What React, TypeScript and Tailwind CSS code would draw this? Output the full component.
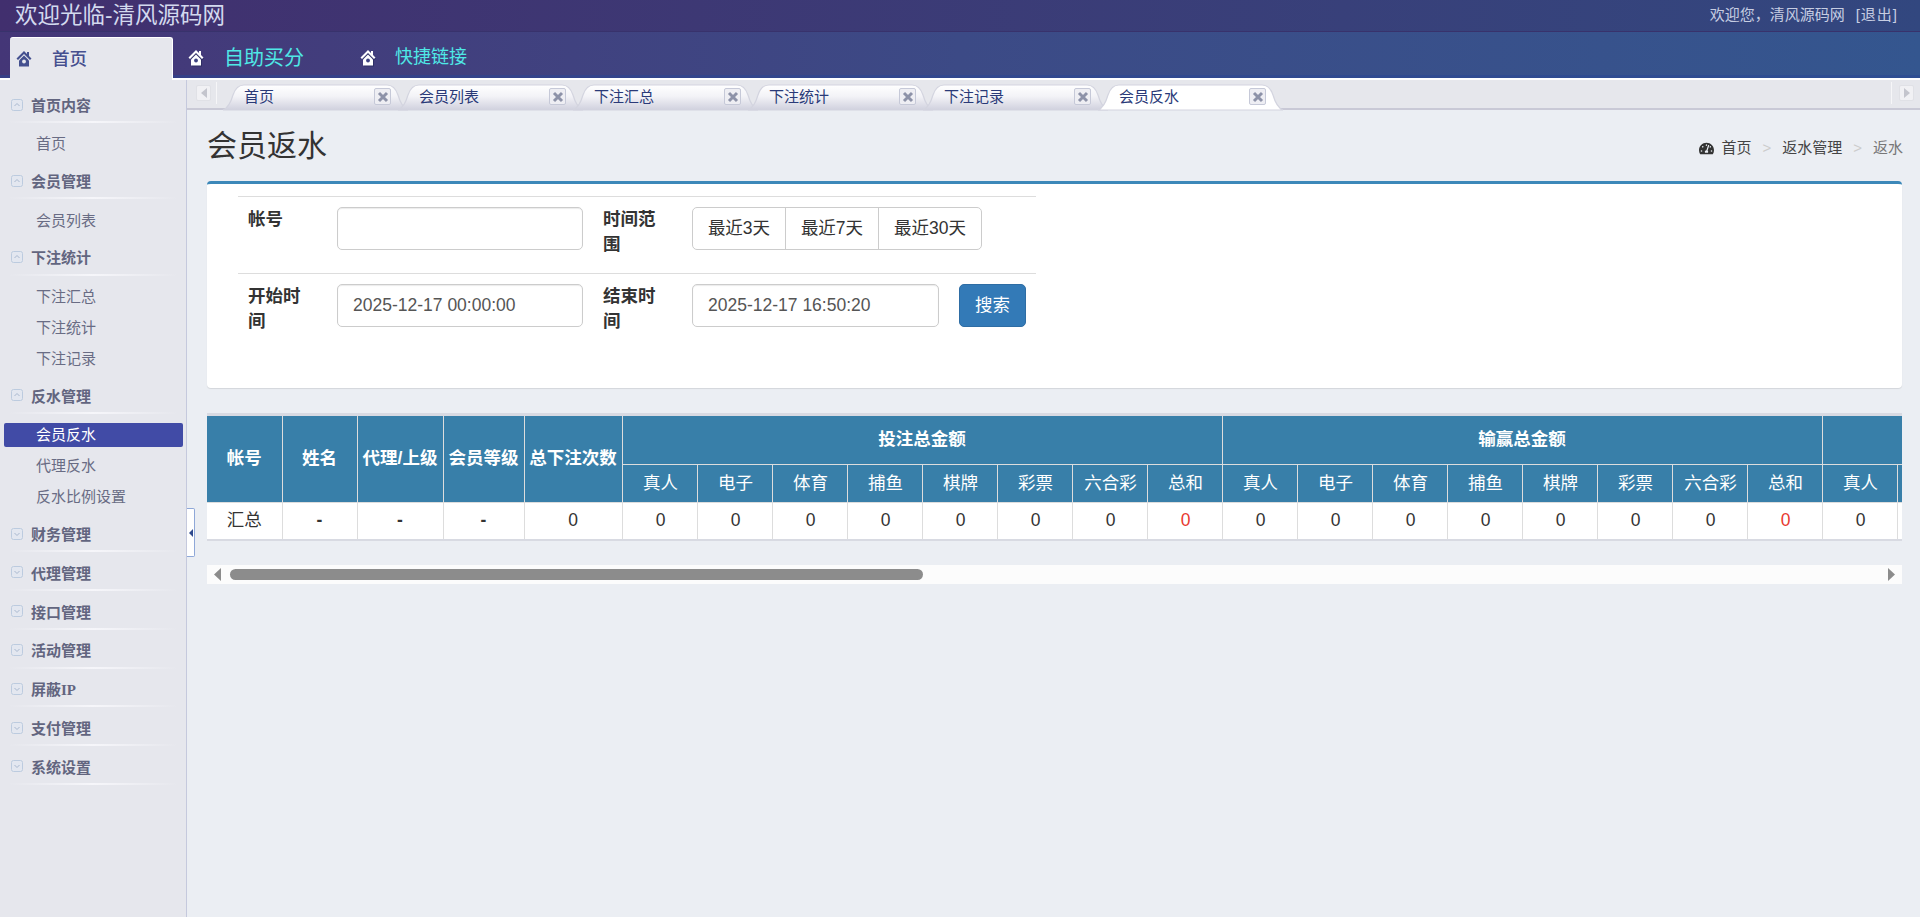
import { FaTachometerAlt } from 'react-icons/fa'

const sidebar = [
  { title: '首页内容', open: true, items: ['首页'] },
  { title: '会员管理', open: true, items: ['会员列表'] },
  { title: '下注统计', open: true, items: ['下注汇总', '下注统计', '下注记录'] },
  { title: '反水管理', open: true, items: ['会员反水', '代理反水', '反水比例设置'] },
  { title: '财务管理', open: false, items: [] },
  { title: '代理管理', open: false, items: [] },
  { title: '接口管理', open: false, items: [] },
  { title: '活动管理', open: false, items: [] },
  { title: '屏蔽IP', open: false, items: [] },
  { title: '支付管理', open: false, items: [] },
  { title: '系统设置', open: false, items: [] },
]

const tabs = ['首页', '会员列表', '下注汇总', '下注统计', '下注记录', '会员反水']
const subCols = ['真人', '电子', '体育', '捕鱼', '棋牌', '彩票', '六合彩', '总和']

function HomeIcon({ active }: { active?: boolean }) {
  const body = active ? '#44508f' : '#ffffff'
  const door = active ? '#e6e7ed' : '#3d4282'
  return (
    <svg width="16" height="18" viewBox="0 0 16 18" className="shrink-0">
      {!active && <path d="M9 2.5 2 9.5 3.5 11 4 10.5V17.5H14V10.5L14.5 11 16 9.5Z" fill="#27295c" opacity="0.7" />}
      <path d="M8 1 .5 8.5 2 10 8 4l6 6 1.5-1.5-2.5-2.5V2h-2v2z" fill={body} />
      <path d="M8 5.5 3 10.5V16.5H13V10.5Z" fill={body} />
      <circle cx="8" cy="11.5" r="1.9" fill={door} />
    </svg>
  )
}

function CollapseIcon({ open }: { open: boolean }) {
  return (
    <svg width="12" height="12" viewBox="0 0 12 12" className="shrink-0 mb-[3px]">
      <rect x="0.5" y="0.5" width="11" height="11" rx="2" fill="#e3e7f0" stroke="#bccbdf" />
      <path d={open ? 'M3.5 7 6 4.5 8.5 7' : 'M3.5 5 6 7.5 8.5 5'} fill="none" stroke="#a9b8cf" strokeWidth="1" />
    </svg>
  )
}

function TabShape({ active, id }: { active: boolean; id: string }) {
  return (
    <svg width="180" height="26" viewBox="0 0 180 26" className="absolute inset-0 overflow-visible">
      <defs>
        <linearGradient id={id} x1="0" y1="0" x2="0" y2="1">
          <stop offset="0" stopColor="#ffffff" />
          <stop offset="0.45" stopColor={active ? '#ffffff' : '#f3f3f7'} />
          <stop offset="1" stopColor={active ? '#ffffff' : '#d0d1de'} />
        </linearGradient>
      </defs>
      <path
        d="M-3 26C2 24 5 18 7 11 9 5 12 1 18 1H161C167 1 170 5 172 11 174 18 177 24 182 26Z"
        fill={`url(#${id})`}
        stroke="#d3d4df"
        strokeWidth="1.2"
      />
    </svg>
  )
}

function CloseBox() {
  return (
    <span className="absolute left-[148px] top-[4px] flex h-[17px] w-[17px] items-center justify-center rounded-[2px] border border-[#c6c9d8] bg-[#eeeef3]">
      <svg width="12" height="12" viewBox="0 0 12 12">
        <path d="M2 2 10 10M10 2 2 10" stroke="#8d92a8" strokeWidth="3" />
      </svg>
    </span>
  )
}

function ArrowBox({ right }: { right?: boolean }) {
  return (
    <span className="flex h-4 w-[15px] items-center justify-center rounded-[2px] border border-[#e0e1e6] bg-[#f1f1f4]">
      <svg width="6" height="10" viewBox="0 0 6 10">
        <path d={right ? 'M0 0 6 5 0 10Z' : 'M6 0 0 5 6 10Z'} fill="#c4c5cd" />
      </svg>
    </span>
  )
}

function Sidebar() {
  return (
    <div className="w-[187px] shrink-0 border-r border-[#c5c9dd] bg-[#e6e7ed] pt-[11px] [font-family:'Liberation_Serif','Noto_Sans_CJK_SC',serif]">
      {sidebar.map((section) => (
        <div key={section.title} className={section.open ? 'mb-[7.5px]' : ''}>
          <div className="h-[38.8px]">
            <div className="flex h-[30px] items-center gap-2 pl-[11px]">
              <CollapseIcon open={section.open} />
              <span className="text-[15px] font-bold text-[#62657f]">{section.title}</span>
            </div>
            <div className="mx-2 h-[2px] bg-gradient-to-r from-transparent via-[#f6f6fa] to-transparent" />
          </div>
          <div className={section.open ? '-mt-[1px]' : ''}>
            {section.items.map((item) => {
              const active = item === '会员反水'
              return (
                <div key={item} className="flex h-[31px] items-center pl-1 pr-[3px]">
                  <div
                    className={
                      'h-6 w-full rounded-[2px] pl-8 text-[15px] leading-6 ' +
                      (active ? 'bg-[#414ba6] text-white' : 'text-[#696c84]')
                    }
                  >
                    {item}
                  </div>
                </div>
              )
            })}
          </div>
        </div>
      ))}
    </div>
  )
}

function TabBar() {
  return (
    <div className="flex h-[30px] shrink-0 items-end border-b-2 border-[#c9c9d6] bg-[#e6e7ec] [font-family:'Liberation_Sans','Noto_Sans_CJK_SC',sans-serif]">
      <div className="ml-[9px] mb-[4px] flex h-[22px] items-center border-r border-[#f6f6f8] pr-[5px]">
        <ArrowBox />
      </div>
      <div className="ml-[9px] flex -mb-[2px]">
        {tabs.map((tab, i) => (
          <div key={tab} className={'relative -mr-[5px] h-[26px] w-[180px] ' + (i === 5 ? 'z-10' : '')}>
            <TabShape active={i === 5} id={`tab-grad-${i}`} />
            <span className="absolute left-[18px] top-[3px] text-[15px] leading-5 text-[#2a3a78]">{tab}</span>
            <CloseBox />
          </div>
        ))}
      </div>
      <div className="ml-auto mb-[4px] flex h-[22px] items-center gap-[7px] border-l border-[#f6f6f8] pl-[7px] pr-[6px]">
        <ArrowBox right />
      </div>
    </div>
  )
}

function SearchCard() {
  const input =
    'h-[42.5px] rounded-[5px] border border-[#ccc] bg-white px-[15px] text-[17.5px] text-[#555] shadow-[inset_0_1px_1px_rgba(0,0,0,0.08)]'
  return (
    <div className="h-[207px] rounded-[4px] border-t-[3px] border-[#3c88b9] bg-white pl-[31px] pt-3 shadow-[0_1px_1px_rgba(0,0,0,0.1)]">
      <table className="w-[798px] table-fixed border-collapse text-[17.5px] leading-[25px] text-[#333]">
        <colgroup>
          <col className="w-[89px]" />
          <col className="w-[266px]" />
          <col className="w-[89px]" />
          <col className="w-[267px]" />
          <col />
        </colgroup>
        <tbody>
          <tr className="h-[77px] border-t border-[#ddd] align-top">
            <th className="p-[10px] text-left font-bold">帐号</th>
            <td className="p-[10px]">
              <input className={input + ' w-full'} />
            </td>
            <th className="p-[10px] text-left font-bold">时间范围</th>
            <td className="p-[10px]" colSpan={2}>
              <div className="inline-flex h-[42.5px] items-stretch rounded-[5px] border border-[#ccc]">
                <span className="flex w-[92px] items-center justify-center">最近3天</span>
                <span className="flex w-[93px] items-center justify-center border-l border-[#ccc]">最近7天</span>
                <span className="flex w-[103px] items-center justify-center border-l border-[#ccc]">最近30天</span>
              </div>
            </td>
          </tr>
          <tr className="h-[77px] border-t border-[#ddd] align-top">
            <th className="p-[10px] text-left font-bold">开始时间</th>
            <td className="p-[10px]">
              <input className={input + ' w-full'} defaultValue="2025-12-17 00:00:00" />
            </td>
            <th className="p-[10px] text-left font-bold">结束时间</th>
            <td className="p-[10px]">
              <input className={input + ' w-full'} defaultValue="2025-12-17 16:50:20" />
            </td>
            <td className="p-[10px]">
              <button className="h-[42.5px] w-[67px] rounded-[5px] border border-[#2e6da4] bg-[#337ab7] text-white">搜索</button>
            </td>
          </tr>
        </tbody>
      </table>
    </div>
  )
}

function SubHeaders() {
  return (
    <>
      {subCols.map((c, i) => (
        <th key={i} className="border border-[#ddd] pl-[2px] font-normal">
          {c}
        </th>
      ))}
    </>
  )
}

function ZeroCells() {
  return (
    <>
      {subCols.map((c) => (
        <td key={c} className={'border border-b-0 border-[#ddd] pl-[2px] ' + (c === '总和' ? 'text-[#e8392f]' : '')}>
          0
        </td>
      ))}
    </>
  )
}

function ReportTable() {
  const leadCols = ['w-[75px]', 'w-[75px]', 'w-[86px]', 'w-[81px]', 'w-[98px]']
  return (
    <div className="mt-[25px] overflow-hidden border-y-[3px] border-[#d8dae2] border-b-2">
      <table className="w-[1765px] table-fixed border-collapse text-center text-[17.5px] leading-[25px] text-[#333]">
        <colgroup>
          {leadCols.map((w, i) => (
            <col key={i} className={w} />
          ))}
          {[...Array(18)].map((_, i) => (
            <col key={i} className="w-[75px]" />
          ))}
        </colgroup>
        <thead className="bg-[#387fa9] text-white">
          <tr className="h-[48px]">
            <th rowSpan={2} className="border border-l-0 border-t-0 border-[#ddd] px-0 font-bold">帐号</th>
            <th rowSpan={2} className="border border-t-0 border-[#ddd] px-0 font-bold">姓名</th>
            <th rowSpan={2} className="border border-t-0 border-[#ddd] px-0 font-bold">代理/上级</th>
            <th rowSpan={2} className="border border-t-0 border-[#ddd] px-0 font-bold">会员等级</th>
            <th rowSpan={2} className="border border-t-0 border-[#ddd] px-0 font-bold whitespace-nowrap">总下注次数</th>
            <th colSpan={8} className="border border-t-0 border-[#ddd] font-bold">投注总金额</th>
            <th colSpan={8} className="border border-t-0 border-[#ddd] font-bold">输赢总金额</th>
            <th colSpan={2} className="border border-t-0 border-[#ddd]" />
          </tr>
          <tr className="h-[38px]">
            <SubHeaders />
            <SubHeaders />
            <th className="border border-[#ddd] pl-[2px] font-normal">真人</th>
            <th className="border border-[#ddd]" />
          </tr>
        </thead>
        <tbody className="bg-white">
          <tr className="h-[37px]">
            <td className="border border-b-0 border-l-0 border-[#ddd]">汇总</td>
            <td className="border border-b-0 border-[#ddd] font-bold">-</td>
            <td className="border border-b-0 border-[#ddd] font-bold">-</td>
            <td className="border border-b-0 border-[#ddd] font-bold">-</td>
            <td className="border border-b-0 border-[#ddd]">0</td>
            <ZeroCells />
            <ZeroCells />
            <td className="border border-b-0 border-[#ddd] pl-[2px]">0</td>
            <td className="border border-b-0 border-[#ddd]" />
          </tr>
        </tbody>
      </table>
    </div>
  )
}

function FakeScrollbar() {
  return (
    <div className="mt-[24px] flex h-[19px] items-center bg-[#fcfcfc] pl-[7px] pr-[7px]">
      <svg width="7" height="13" viewBox="0 0 7 13" className="shrink-0">
        <path d="M7 0 0 6.5 7 13Z" fill="#8c8c8c" />
      </svg>
      <div className="ml-[9px] h-[11px] w-[693px] rounded-full bg-[#8c8c8c]" />
      <svg width="7" height="13" viewBox="0 0 7 13" className="ml-auto shrink-0">
        <path d="M0 0 7 6.5 0 13Z" fill="#8c8c8c" />
      </svg>
    </div>
  )
}

export default function App() {
  return (
    <div className="flex h-screen flex-col overflow-hidden bg-[#ebeef3] [font-family:'Liberation_Sans','Noto_Sans_CJK_SC',sans-serif]">
      {/* top bar */}
      <div className="flex h-[31px] shrink-0 items-center justify-between bg-gradient-to-r from-[#412f6e] to-[#32477f] pl-[15px] pr-[22px]">
        <span className="text-[22.5px] leading-[31px] text-[#d3d9ee]">欢迎光临-清风源码网</span>
        <span className="text-[15px] text-[#c6cde2]">
          欢迎您，清风源码网<span className="ml-[11px] tracking-[1px]">[退出]</span>
        </span>
      </div>

      {/* main nav */}
      <div className="flex h-[49px] shrink-0 items-end border-b-2 border-white bg-gradient-to-r from-[#443677] via-[#3c4a86] to-[#34568f] shadow-[inset_0_1px_0_#38326c,inset_0_-3px_0_rgba(40,70,150,0.5)]">
        <div className="z-10 ml-[10px] -mb-[2px] flex h-[43px] w-[163px] items-center gap-[20px] rounded-t-[3px] border-r border-t border-white bg-[#e6e7ed] pl-[6px]">
          <HomeIcon active />
          <span className="text-[17.5px] font-medium text-[#46508f]">首页</span>
        </div>
        <div className="ml-[15px] flex h-[41px] items-center gap-[20px]">
          <HomeIcon />
          <span className="text-[20px] text-[#4fe8e6]">自助买分</span>
        </div>
        <div className="ml-[56px] flex h-[41px] items-center gap-[19px]">
          <HomeIcon />
          <span className="text-[18px] text-[#4fe8e6]">快捷链接</span>
        </div>
      </div>

      <div className="flex min-h-0 flex-1">
        <Sidebar />
        <div className="relative flex min-w-0 flex-1 flex-col">
          {/* collapse handle */}
          <div className="absolute left-0 top-[428px] flex h-[49px] w-[8px] items-center justify-center rounded-r-[2px] border border-l-0 border-[#8fa8d8] bg-white">
            <svg width="4" height="8" viewBox="0 0 4 8">
              <path d="M4 0 0 4 4 8Z" fill="#2f4a8e" />
            </svg>
          </div>
          <TabBar />
          <div className="pl-5 pr-[18px]">
            <div className="flex h-[71px] items-center justify-between">
              <h1 className="text-[30px] font-normal text-[#333]">会员返水</h1>
              <div className="-mr-[1px] mt-[5px] flex items-center text-[15px] text-[#444]">
                <FaTachometerAlt className="mr-[7px] h-[15px] w-[15px] text-[#333]" />
                <span>首页</span>
                <span className="mx-[11px] text-[#ccc]">&gt;</span>
                <span>返水管理</span>
                <span className="mx-[11px] text-[#ccc]">&gt;</span>
                <span className="text-[#777]">返水</span>
              </div>
            </div>
            <SearchCard />
            <ReportTable />
            <FakeScrollbar />
          </div>
        </div>
      </div>
    </div>
  )
}
